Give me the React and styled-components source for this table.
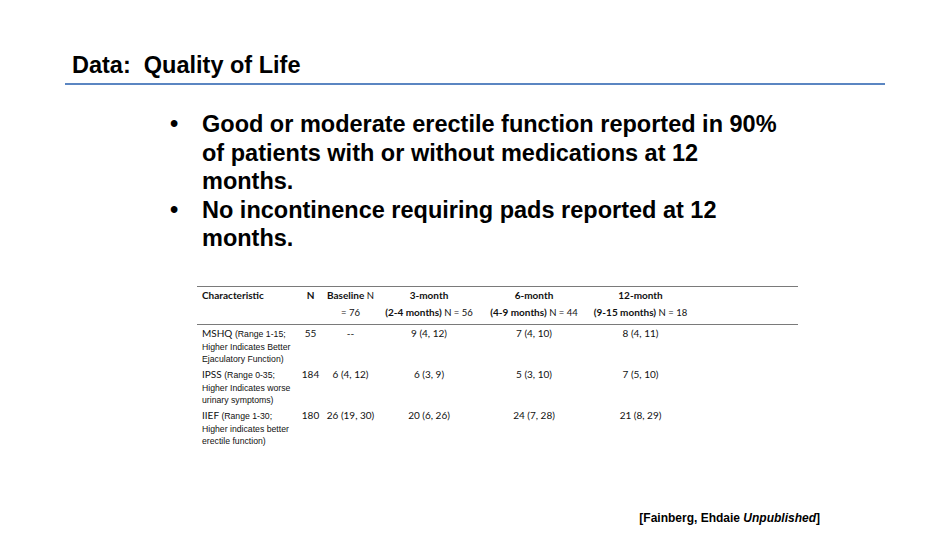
import React from "react"
import styled, { createGlobalStyle } from "styled-components"

const GlobalStyle = createGlobalStyle`
  html, body {
    margin: 0;
    padding: 0;
    background: #fff;
  }
  body {
    font-family: "Liberation Sans", Arial, sans-serif;
    color: #000;
  }
`

const Slide = styled.div`
  width: 950px;
  height: 535px;
  box-sizing: border-box;
  display: flex;
  flex-direction: column;
  overflow: hidden;
  background: #fff;
`

const TitleBar = styled.header`
  margin: 51px 65px 0 65px;
  padding: 0 0 4px 7px;
  border-bottom: 2px solid #5b86c2;
`

const Title = styled.h1`
  margin: 0;
  font-size: 23.5px;
  line-height: 28px;
  font-weight: bold;
  white-space: pre;
`

const Bullets = styled.ul`
  list-style: none;
  margin: 25px 0 0 170px;
  padding: 0;
  width: 625px;
`

const Bullet = styled.li`
  display: flex;
  font-size: 23.5px;
  line-height: 28.6px;
  font-weight: bold;

  &::before {
    content: "•";
    flex: 0 0 32px;
  }
`

const Table = styled.div`
  margin: 33px 0 0 197px;
  width: 601px;
  font-family: Lato, "Open Sans", sans-serif;
  font-size: 10px;
  color: #111;
`

const cols = "101px 25px 55px 102px 108px 105px 1fr"

const HeadRow = styled.div`
  display: grid;
  grid-template-columns: ${cols};
  border-top: 1px solid #7a7a7a;
  border-bottom: 1px solid #7a7a7a;
  height: 37px;
  line-height: 17px;
`

const HeadCell = styled.div`
  text-align: ${(p) => (p.$left ? "left" : "center")};
  padding-left: ${(p) => (p.$left ? "5px" : "0")};
  font-weight: bold;

  span {
    font-weight: normal;
    font-size: 9.5px;
  }
`

const Row = styled.div`
  display: grid;
  grid-template-columns: ${cols};
  height: 41px;
  padding-top: 3px;
  box-sizing: border-box;
  line-height: 11.7px;
`

const Label = styled.div`
  padding-left: 5px;
  font-size: 10px;

  small {
    font-family: "Liberation Sans", Arial, sans-serif;
    font-size: 8.7px;
  }
`

const Value = styled.div`
  text-align: center;
  font-size: 10px;
`

const Citation = styled.p`
  margin: auto 130px 9px 0;
  align-self: flex-end;
  font-size: 12px;
  font-weight: bold;
  line-height: 16px;

  em {
    font-style: italic;
  }
`

const rows = [
  {
    name: "MSHQ",
    range: "(Range 1-15;",
    lines: ["Higher Indicates Better", "Ejaculatory Function)"],
    values: ["55", "--", "9 (4, 12)", "7 (4, 10)", "8 (4, 11)"],
  },
  {
    name: "IPSS",
    range: "(Range 0-35;",
    lines: ["Higher Indicates worse", "urinary symptoms)"],
    values: ["184", "6 (4, 12)", "6 (3, 9)", "5 (3, 10)", "7 (5, 10)"],
  },
  {
    name: "IIEF",
    range: "(Range 1-30;",
    lines: ["Higher indicates better", "erectile function)"],
    values: ["180", "26 (19, 30)", "20 (6, 26)", "24 (7, 28)", "21 (8, 29)"],
  },
]

export default function App() {
  return (
    <>
      <GlobalStyle />
      <Slide>
        <TitleBar>
          <Title>Data:  Quality of Life</Title>
        </TitleBar>

        <Bullets>
          <Bullet>
            Good or moderate erectile function reported in 90% of patients
            with or without medications at 12 months.
          </Bullet>
          <Bullet>No incontinence requiring pads reported at 12 months.</Bullet>
        </Bullets>

        <Table>
          <HeadRow>
            <HeadCell $left>Characteristic</HeadCell>
            <HeadCell>N</HeadCell>
            <HeadCell>
              Baseline <span>N</span>
              <br />
              <span>= 76</span>
            </HeadCell>
            <HeadCell>
              3-month
              <br />
              (2-4 months) <span>N = 56</span>
            </HeadCell>
            <HeadCell>
              6-month
              <br />
              (4-9 months) <span>N = 44</span>
            </HeadCell>
            <HeadCell>
              12-month
              <br />
              (9-15 months) <span>N = 18</span>
            </HeadCell>
            <HeadCell />
          </HeadRow>

          {rows.map((r) => (
            <Row key={r.name}>
              <Label>
                {r.name} <small>{r.range}</small>
                {r.lines.map((l) => (
                  <React.Fragment key={l}>
                    <br />
                    <small>{l}</small>
                  </React.Fragment>
                ))}
              </Label>
              {r.values.map((v, i) => (
                <Value key={i}>{v}</Value>
              ))}
              <Value />
            </Row>
          ))}
        </Table>

        <Citation>
          [Fainberg, Ehdaie <em>Unpublished</em>]
        </Citation>
      </Slide>
    </>
  )
}
